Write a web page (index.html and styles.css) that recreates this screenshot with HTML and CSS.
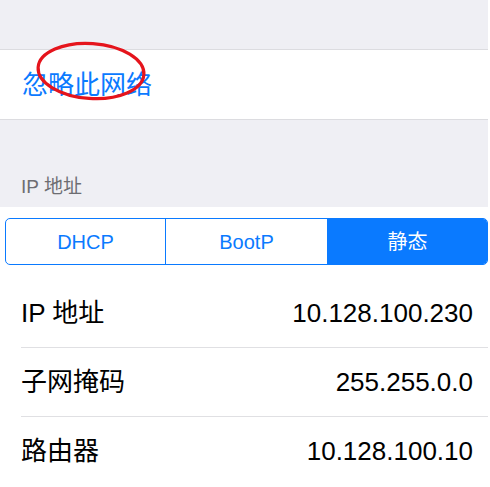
FILE: index.html
```html
<!DOCTYPE html>
<html lang="zh-CN">
<head>
<meta charset="utf-8">
<title>网络设置</title>
<link rel="stylesheet" href="styles.css">
</head>
<body>
<div class="page">
  <div class="spacer-top"></div>
  <div class="action-cell">
    <span class="action-text">忽略此网络</span>
    <svg class="circle-mark" width="124" height="70" viewBox="0 0 124 70">
      <ellipse cx="62" cy="35" rx="53" ry="27.5" fill="none" stroke="#e5141c" stroke-width="3.2" transform="rotate(4 62 35)"/>
    </svg>
  </div>
  <div class="section-header">IP 地址</div>
  <div class="section">
    <div class="segmented">
      <div class="seg">DHCP</div>
      <div class="seg">BootP</div>
      <div class="seg seg-active">静态</div>
    </div>
    <div class="row"><div class="row-inner"><span class="label">IP 地址</span><span class="value">10.128.100.230</span></div></div>
    <div class="row"><div class="row-inner"><span class="label">子网掩码</span><span class="value">255.255.0.0</span></div></div>
    <div class="row"><div class="row-inner last"><span class="label">路由器</span><span class="value">10.128.100.10</span></div></div>
  </div>
</div>
</body>
</html>
```
FILE: styles.css
```css
html, body {
  margin: 0;
  padding: 0;
  background: #ffffff;
}
body {
  font-family: "Liberation Sans", "Noto Sans CJK SC", sans-serif;
  color: #000000;
}
.page {
  width: 488px;
  overflow: hidden;
}
.spacer-top {
  height: 49px;
  background: #efeff4;
  border-bottom: 1px solid #dcdce0;
}
.action-cell {
  position: relative;
  height: 69px;
  display: flex;
  align-items: center;
  padding-left: 22px;
  background: #ffffff;
  border-bottom: 1px solid #dcdce0;
}
.action-text {
  font-size: 26px;
  color: #0a7aff;
  line-height: 30px;
}
.circle-mark {
  position: absolute;
  left: 29px;
  top: -14px;
}
.section-header {
  height: 76px;
  padding: 0 0 11px 21px;
  background: #efeff4;
  display: flex;
  align-items: flex-end;
  font-size: 19px;
  line-height: 19px;
  color: #6d6d72;
}
.section {
  background: #ffffff;
  padding-top: 11px;
}
.segmented {
  margin: 0 0 14px 5px;
  height: 45px;
  border: 1px solid #0a7aff;
  border-radius: 5px;
  display: grid;
  grid-template-columns: 159px 162px 1fr;
  overflow: hidden;
}
.seg {
  display: flex;
  align-items: center;
  justify-content: center;
  font-size: 20px;
  line-height: 24px;
  color: #0a7aff;
}
.seg + .seg {
  border-left: 1px solid #0a7aff;
}
.seg-active {
  background: #0a7aff;
  color: #ffffff;
}
.row {
  padding-left: 21px;
}
.row-inner {
  height: 68px;
  display: flex;
  align-items: center;
  justify-content: space-between;
  padding-right: 15px;
  border-bottom: 1px solid #e0e0e3;
  font-size: 26px;
  line-height: 30px;
}
.row-inner.last {
  border-bottom: none;
}
.value {
  color: #000000;
}
```
